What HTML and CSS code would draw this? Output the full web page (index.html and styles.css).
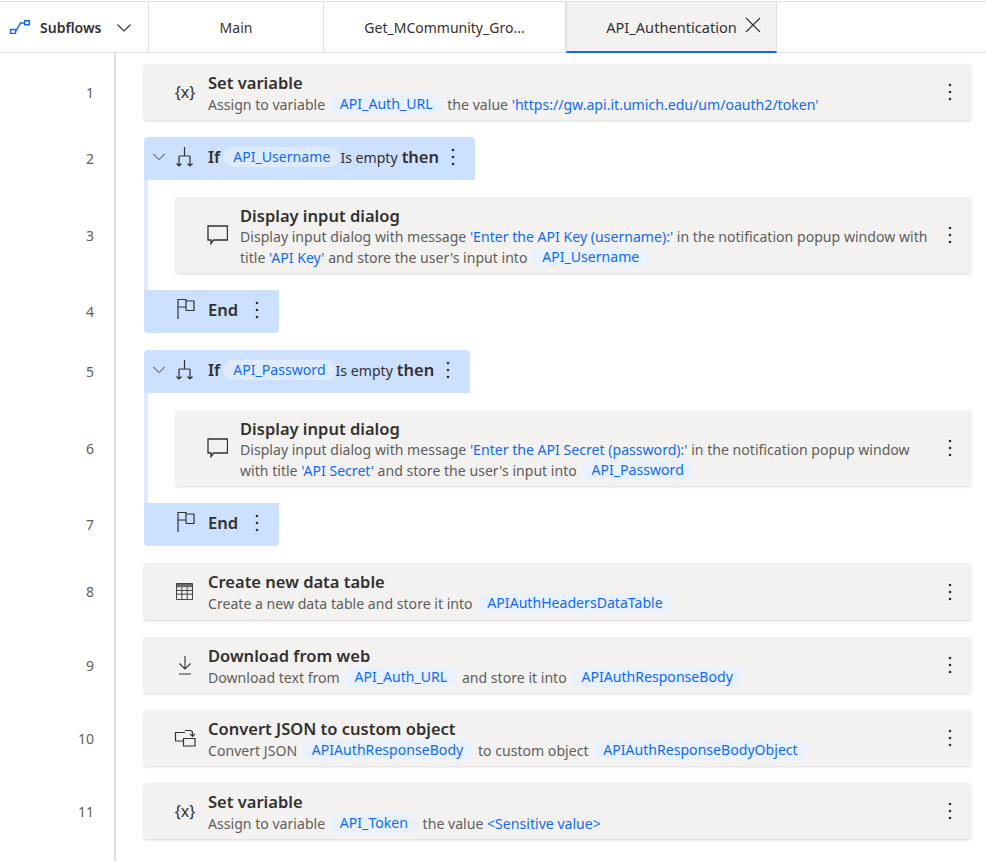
FILE: index.html
```html
<!DOCTYPE html>
<html lang="en">
<head>
    <meta charset="UTF-8">
    <title>API_Authentication</title>
    <link rel="stylesheet" href="styles.css">
</head>
<body>
    <svg class="sprite" width="0" height="0">
        <symbol id="dots" viewBox="0 0 4 20"><circle cx="2" cy="3" r="1.3"/><circle cx="2" cy="10" r="1.3"/><circle cx="2" cy="17" r="1.3"/></symbol>
        <symbol id="chev" viewBox="0 0 16 16"><path d="M1.5 4.5 8 11l6.500-6.500" fill="none" stroke="currentColor" stroke-width="1.100"/></symbol>
        <symbol id="branch" viewBox="0 0 20 22"><path d="M9.500 1v9M4 10h11M4 10v10M15 10v10M1.500 17.500 4 20l2.500-2.500M12.500 17.500 15 20l2.500-2.500" fill="none" stroke="currentColor" stroke-width="1.200"/></symbol>
        <symbol id="flag" viewBox="0 0 20 22"><path d="M2 0v20M2 .5h8v11M10 2h8v9.500h-8M2 8h8" fill="none" stroke="currentColor" stroke-width="1.200"/></symbol>
        <symbol id="bubble" viewBox="0 0 22 20"><path d="M2 1h19.500v14H7.500L5 18.500V15H2z" fill="none" stroke="currentColor" stroke-width="1.300"/></symbol>
        <symbol id="table" viewBox="0 0 16 16"><path d="M.5.500h15v15H.5zM.5 7h15M.5 10.500h15M5.500 4v11.500M10.500 4v11.500" fill="none" stroke="currentColor" stroke-width=".9"/><path d="M.5.500h15V4H.5z" fill="currentColor" opacity=".75"/></symbol>
        <symbol id="download" viewBox="0 0 14 20"><path d="M7 1v13M1.500 8.500 7 14l5.500-5.500M1 19h12" fill="none" stroke="currentColor" stroke-width="1.100"/></symbol>
        <symbol id="convert" viewBox="0 0 22 20"><path d="M9 13H1.500V4.500H11M9.500 10.500H21V18H9.500zM11 2.500h5c1.500 0 2.500 1 2.500 2.500V8M16 5.800l2.500 2.500L21 5.800" fill="none" stroke="currentColor" stroke-width="1.200"/></symbol>
    </svg>

    <div class="tabs">
        <div class="tab subflows">
            <svg class="sub-icon" viewBox="0 0 22 14"><path d="M1.500 9.500h5v4h-5zM15.700.8h4.600v4h-4.600zM7 11l4.500-8h4" fill="none" stroke="#0f6cf0" stroke-width="1.500"/></svg>
            <b>Subflows</b>
            <svg class="sub-chev"><use href="#chev"/></svg>
        </div>
        <div class="tab main-tab">Main</div>
        <div class="tab get-tab">Get_MCommunity_Gro...</div>
        <div class="tab active">API_Authentication
            <svg class="close" viewBox="0 0 16 16"><path d="M1 1l14 14M15 1 1 15" fill="none" stroke="#323130" stroke-width="1.100"/></svg>
        </div>
    </div>

    <div class="flow">
        <div class="row">
            <div class="num">1</div>
            <div class="cell">
                <div class="card">
                    <span class="ico var">{x}</span>
                    <div class="txt">
                        <h3>Set variable</h3>
                        <p>Assign to variable <span class="chip">API_Auth_URL</span> the value <a>'https://gw.api.it.umich.edu/um/oauth2/token'</a></p>
                    </div>
                    <svg class="dots"><use href="#dots"/></svg>
                </div>
            </div>
        </div>

        <div class="row top">
            <div class="num">2</div>
            <div class="cell">
                <div class="bar">
                    <svg class="bar-chev"><use href="#chev"/></svg>
                    <svg class="bar-ico"><use href="#branch"/></svg>
                    <b>If</b><span class="chip">API_Username</span><span class="cond">Is empty</span><b class="then">then</b>
                    <svg class="dots"><use href="#dots"/></svg>
                </div>
            </div>
        </div>
        <div class="row inner">
            <div class="num">3</div>
            <div class="cell">
                <div class="card tall">
                    <svg class="ico"><use href="#bubble"/></svg>
                    <div class="txt">
                        <h3>Display input dialog</h3>
                        <p>Display input dialog with message <a>'Enter the API Key (username):'</a> in the notification popup window with<br>title <a>'API Key'</a> and store the user's input into <span class="chip">API_Username</span></p>
                    </div>
                    <svg class="dots"><use href="#dots"/></svg>
                </div>
            </div>
        </div>
        <div class="row bottom">
            <div class="num">4</div>
            <div class="cell">
                <div class="bar end">
                    <svg class="bar-ico"><use href="#flag"/></svg>
                    <b>End</b>
                    <svg class="dots"><use href="#dots"/></svg>
                </div>
            </div>
        </div>

        <div class="row top">
            <div class="num">5</div>
            <div class="cell">
                <div class="bar">
                    <svg class="bar-chev"><use href="#chev"/></svg>
                    <svg class="bar-ico"><use href="#branch"/></svg>
                    <b>If</b><span class="chip">API_Password</span><span class="cond">Is empty</span><b class="then">then</b>
                    <svg class="dots"><use href="#dots"/></svg>
                </div>
            </div>
        </div>
        <div class="row inner">
            <div class="num">6</div>
            <div class="cell">
                <div class="card tall">
                    <svg class="ico"><use href="#bubble"/></svg>
                    <div class="txt">
                        <h3>Display input dialog</h3>
                        <p>Display input dialog with message <a>'Enter the API Secret (password):'</a> in the notification popup window<br>with title <a>'API Secret'</a> and store the user's input into <span class="chip">API_Password</span></p>
                    </div>
                    <svg class="dots"><use href="#dots"/></svg>
                </div>
            </div>
        </div>
        <div class="row bottom">
            <div class="num">7</div>
            <div class="cell">
                <div class="bar end">
                    <svg class="bar-ico"><use href="#flag"/></svg>
                    <b>End</b>
                    <svg class="dots"><use href="#dots"/></svg>
                </div>
            </div>
        </div>

        <div class="row">
            <div class="num">8</div>
            <div class="cell">
                <div class="card wide">
                    <svg class="ico small"><use href="#table"/></svg>
                    <div class="txt">
                        <h3>Create new data table</h3>
                        <p>Create a new data table and store it into <span class="chip">APIAuthHeadersDataTable</span></p>
                    </div>
                    <svg class="dots"><use href="#dots"/></svg>
                </div>
            </div>
        </div>
        <div class="row">
            <div class="num">9</div>
            <div class="cell">
                <div class="card">
                    <svg class="ico"><use href="#download"/></svg>
                    <div class="txt">
                        <h3>Download from web</h3>
                        <p>Download text from <span class="chip">API_Auth_URL</span> and store it into <span class="chip">APIAuthResponseBody</span></p>
                    </div>
                    <svg class="dots"><use href="#dots"/></svg>
                </div>
            </div>
        </div>
        <div class="row">
            <div class="num">10</div>
            <div class="cell">
                <div class="card">
                    <svg class="ico"><use href="#convert"/></svg>
                    <div class="txt">
                        <h3>Convert JSON to custom object</h3>
                        <p>Convert JSON <span class="chip">APIAuthResponseBody</span> to custom object <span class="chip">APIAuthResponseBodyObject</span></p>
                    </div>
                    <svg class="dots"><use href="#dots"/></svg>
                </div>
            </div>
        </div>
        <div class="row">
            <div class="num">11</div>
            <div class="cell">
                <div class="card">
                    <span class="ico var">{x}</span>
                    <div class="txt">
                        <h3>Set variable</h3>
                        <p>Assign to variable <span class="chip">API_Token</span> the value <a>&lt;Sensitive value&gt;</a></p>
                    </div>
                    <svg class="dots"><use href="#dots"/></svg>
                </div>
            </div>
        </div>
    </div>
</body>
</html>
```

FILE: styles.css
```css
*{
    margin: 0;
    padding: 0;
    box-sizing: border-box;
}
body{
    font-family: "Noto Sans", "Liberation Sans", sans-serif;
    font-size: 14.1px;
    color: #323130;
    background: #fff;
    overflow: hidden;
}
.sprite{
    display: block;
    height: 0;
}

/* tab strip */
.tabs{
    display: flex;
    height: 52px;
    margin-top: 1px;
    border-top: 1px solid #e1dfdd;
    border-bottom: 1px solid #e1dfdd;
    font-size: 14px;
}
.tab{
    display: flex;
    align-items: center;
    justify-content: center;
    border-right: 1px solid #e1dfdd;
    white-space: nowrap;
    margin-bottom: -1px;
}
.subflows{
    width: 149px;
    justify-content: flex-start;
    padding-left: 9px;
}
.subflows b{
    font-weight: 600;
    margin-left: 9px;
}
.sub-icon{
    width: 22px;
    height: 14px;
    margin-top: -1px;
}
.sub-chev{
    width: 16px;
    height: 16px;
    margin-left: 14px;
}
.main-tab{
    width: 175px;
}
.get-tab{
    width: 242px;
}
.active{
    width: 211px;
    padding-left: 24px;
    font-size: 14.6px;
    background: #f3f2f1;
    border-left: 1px solid #e1dfdd;
    border-bottom: 2px solid #0f6cf0;
}
.close{
    width: 16px;
    height: 16px;
    margin-left: 8px;
    margin-top: -3px;
}

/* steps */
.flow{
    padding-top: 3px;
    height: 808px;
    background: linear-gradient(#e1dfdd, #e1dfdd) 114px 0 / 2px 100% no-repeat;
}
.row{
    display: flex;
    padding: 8px 15px 9px 0;
}
.row.top{
    padding-bottom: 0;
}
.row.inner{
    padding-top: 0;
    padding-bottom: 0;
}
.row.bottom{
    padding-top: 0;
}
.num{
    width: 115px;
    padding-right: 21px;
    flex: none;
    display: flex;
    align-items: center;
    justify-content: flex-end;
    color: #605e5c;
    font-size: 14px;
}
.cell{
    flex: 1;
    margin-left: 29px;
}
.inner .cell{
    border-left: 4px solid #deebff;
    padding: 17px 0 17px 28px;
}
.card{
    height: 56px;
    display: flex;
    align-items: center;
    background: #f3f2f1;
    border-radius: 2px;
    box-shadow: 0 1px 3px rgba(0,0,0,.16);
}
.card.tall{
    height: 76px;
}
.card.wide{
    height: 57px;
}
.ico{
    width: 22px;
    height: 20px;
    margin-left: 30px;
    flex: none;
    color: #323130;
}
.ico.small{
    width: 17px;
    height: 17px;
    margin-left: 32px;
    margin-right: 3px;
    color: #3b3a39;
}
.var{
    font-size: 16px;
    line-height: 20px;
    text-align: center;
}
.txt{
    align-self: flex-start;
    padding-top: 8px;
    margin-left: 12px;
    flex: 1;
}
h3{
    font-size: 16.5px;
    font-weight: 600;
    line-height: 21px;
}
p{
    margin-top: 1px;
    color: #605e5c;
    font-size: 14.1px;
    line-height: 21px;
    white-space: nowrap;
}
.tall p{
    margin-top: 0;
}
a{
    color: #0f6cf0;
}
.chip{
    display: inline-block;
    padding: 0 10px;
    margin: 0 1px;
    height: 20px;
    line-height: 20px;
    border-radius: 10px;
    background: #e8f1fd;
    color: #0f6cf0;
    vertical-align: top;
}
.dots{
    width: 4px;
    height: 20px;
    flex: none;
    fill: #323130;
    margin-right: 19px;
}

/* if / end blocks */
.bar{
    display: inline-flex;
    align-items: center;
    height: 43px;
    background: #cce0ff;
    border-radius: 4px 4px 0 0;
    padding: 0 20px 4px 0;
    vertical-align: top;
}
.bar.end{
    border-radius: 0 0 4px 4px;
    padding-left: 32px;
}
.bar b{
    font-size: 16.5px;
    font-weight: 600;
}
.bar .chip{
    margin: 0 0 0 3px;
    background: #deebff;
}
.bar .dots{
    margin: 0 0 0 12px;
}
.end .dots{
    margin-left: 17px;
}
.bar-chev{
    width: 14px;
    height: 14px;
    margin-left: 8px;
}
.bar-ico{
    width: 20px;
    height: 22px;
    margin-left: 9px;
    margin-right: 13px;
    color: #323130;
}
.end .bar-ico{
    margin-left: 0;
    margin-right: 12px;
}
.cond{
    margin-top: 2px;
}
.then{
    margin-left: 4px;
}
```
